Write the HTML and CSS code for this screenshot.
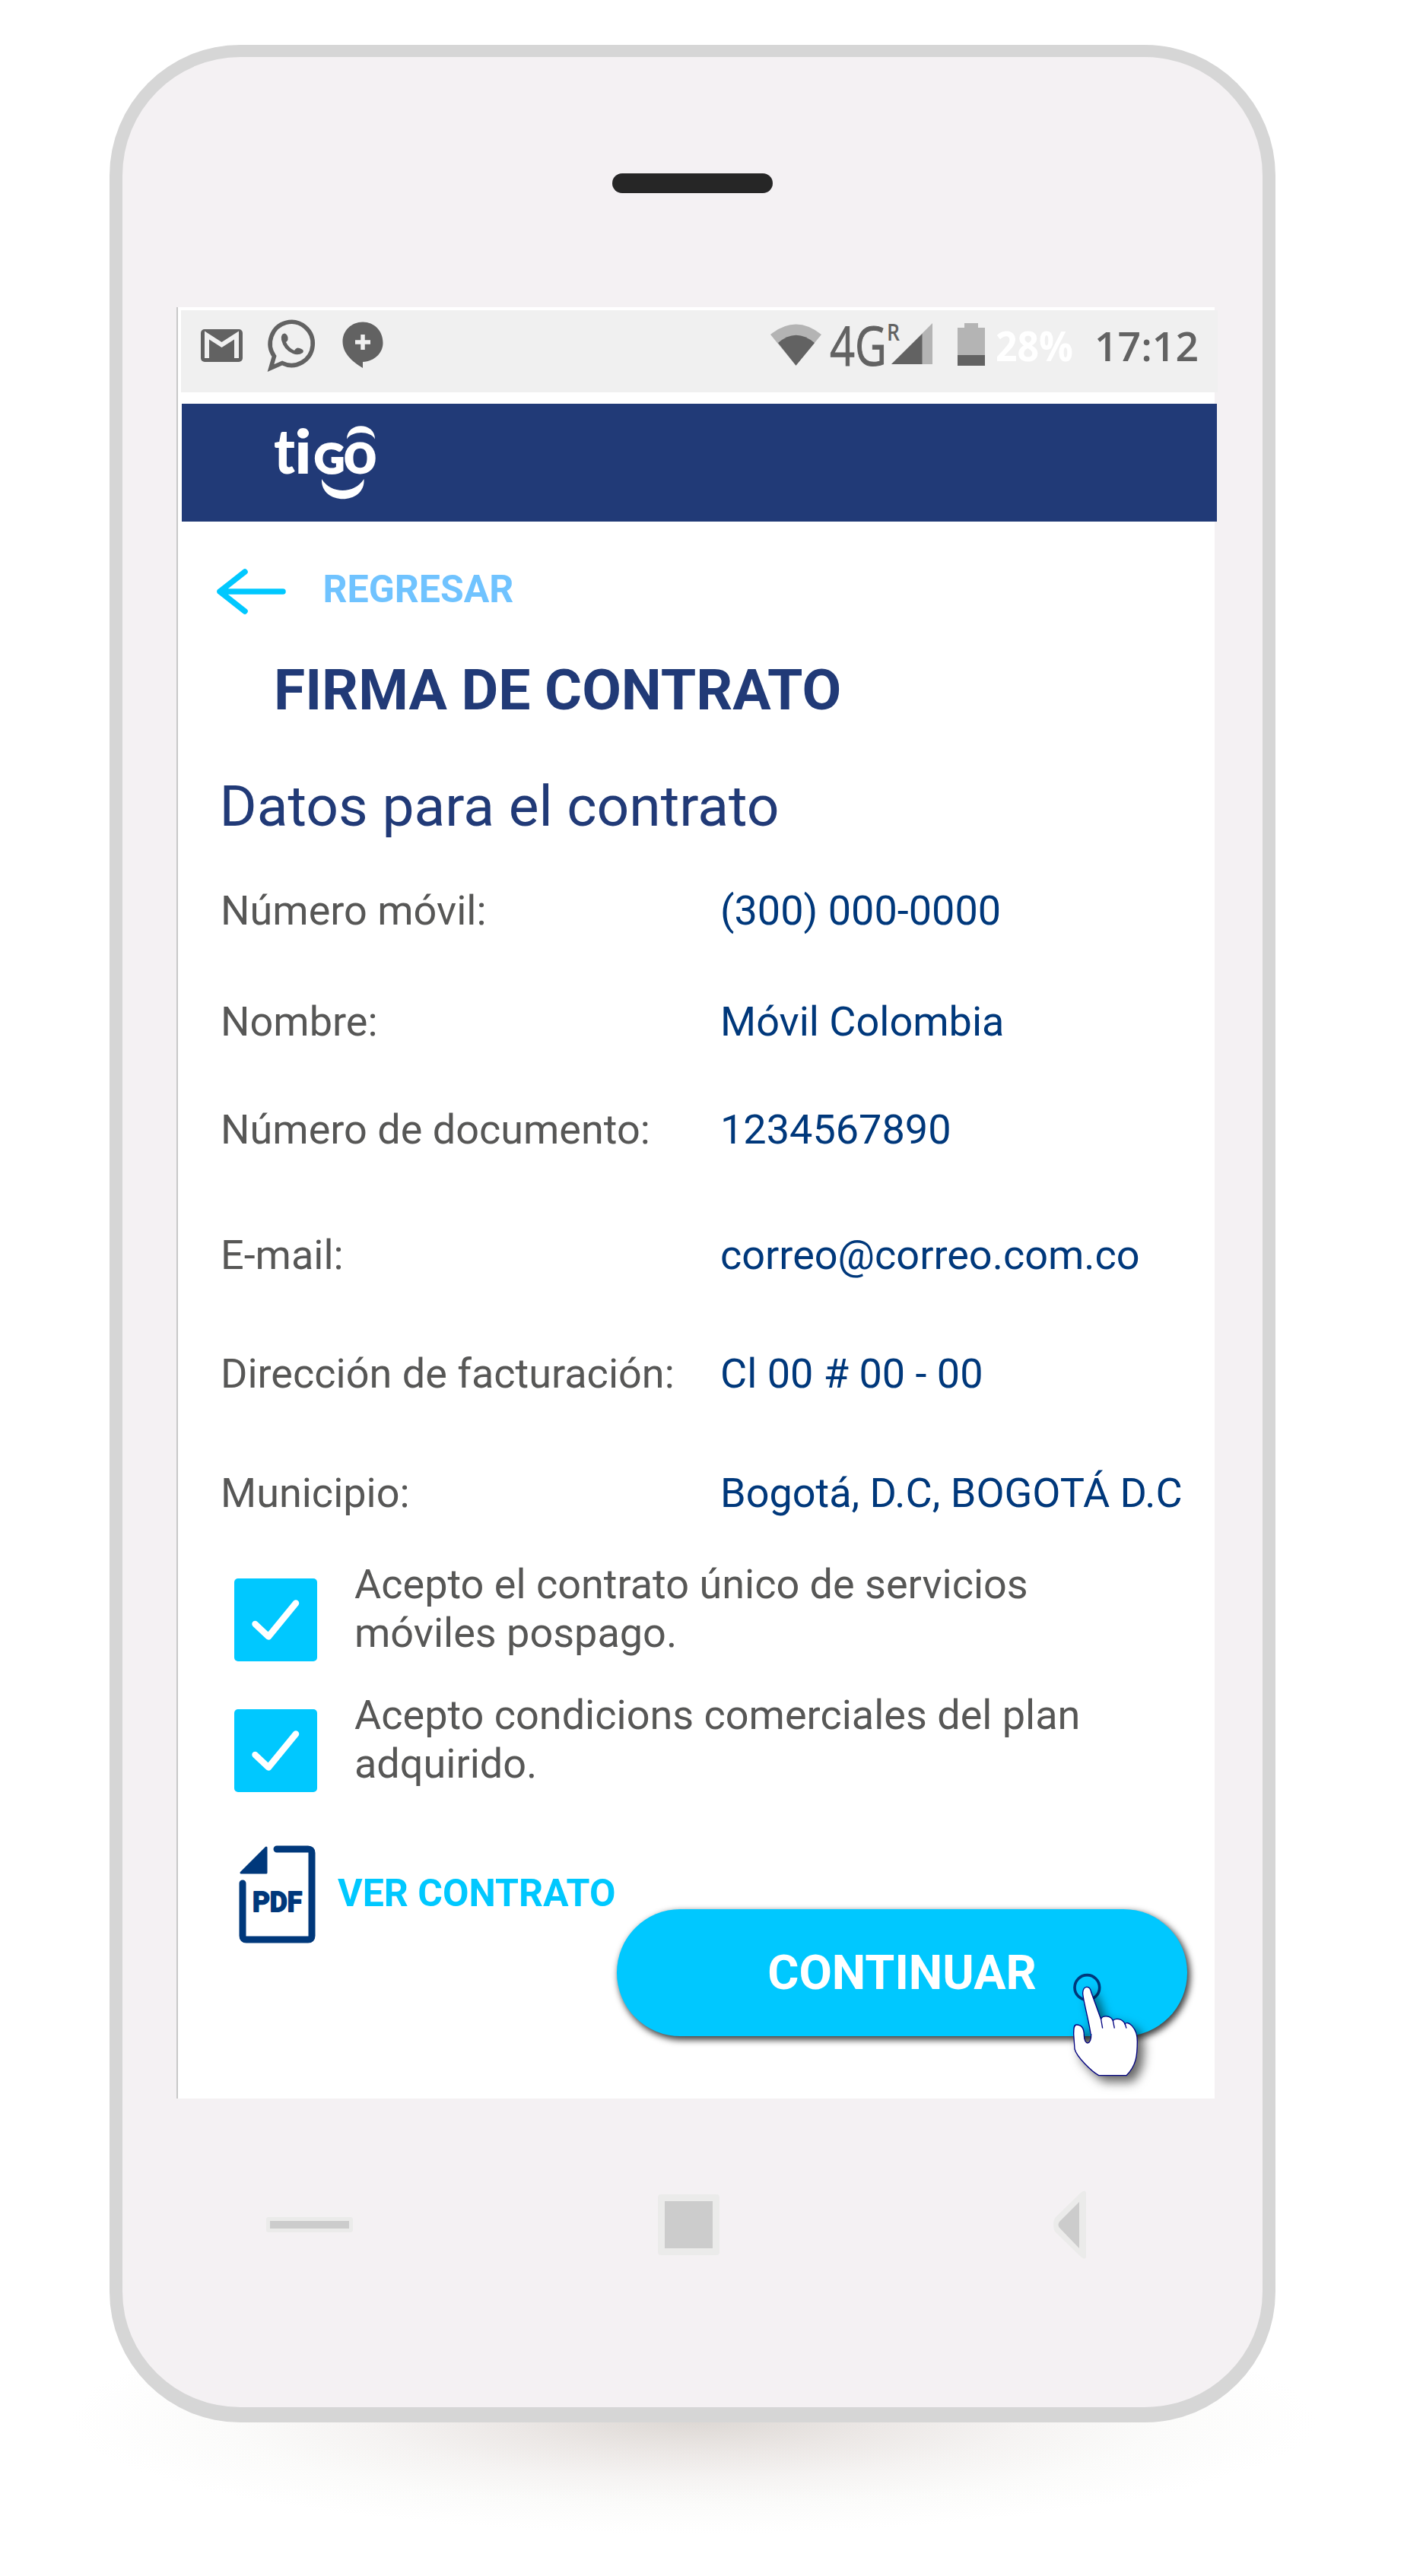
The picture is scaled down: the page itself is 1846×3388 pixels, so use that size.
FILE: index.html
```html
<!DOCTYPE html>
<html lang="es">
<head>
    <meta charset="UTF-8">
    <meta name="viewport" content="width=device-width, initial-scale=1.0">
    <title>Firma de contrato</title>
    <link rel="stylesheet" href="styles.css">
</head>
<body>
    <div class="phone">
        <div class="speaker"></div>

        <div class="screen">
            <div class="status">
                <svg class="gmail" width="55" height="72" viewBox="0 0 55 72">
                    <rect x="0" y="13" width="55" height="43" rx="5" fill="#626262"/>
                    <path d="M8 51V21L27.5 33.5L47 21V51" fill="none" stroke="#f0f0f0" stroke-width="6"/>
                </svg>
                <svg class="whatsapp" width="62" height="72" viewBox="0 0 62 72">
                    <path d="M3 64L7.5 48.5A28 28.5 0 1 1 18 57.5Z" fill="none" stroke="#626262" stroke-width="5.6"/>
                    <path d="M18 20Q22 16 25 22Q27 27 23 30Q27 38 34 41Q37 36 41 38Q48 40 45 44Q39 48 32 45Q20 40 17 27Q16 23 18 20Z" fill="#626262"/>
                </svg>
                <svg class="bubble" width="54" height="72" viewBox="0 0 54 72">
                    <path d="M27 3.5C42 3.5 53.5 15 53.5 31C53.5 44 43 55 27 56V64C12 55 0.5 44 0.5 29C0.5 15 12 3.5 27 3.5Z" fill="#626262"/>
                    <path d="M27 20V40M17 30H37" fill="none" stroke="#f0f0f0" stroke-width="5.5"/>
                </svg>

                <svg class="wifi" width="67" height="72" viewBox="0 0 67 72">
                    <path d="M0 20Q33.5 -7 67 20L33.5 60.7Z" fill="#b4b4b4"/>
                    <path d="M10 31Q33.5 10.5 58 31L33.5 60.7Z" fill="#626262"/>
                </svg>
                <svg class="network" width="134" height="72" viewBox="0 0 134 72">
                    <text x="-1" y="61" font-size="72" stroke="#626262" stroke-width="1" textLength="75" lengthAdjust="spacingAndGlyphs">4G</text>
                    <text x="74" y="28" font-size="31" font-weight="600" textLength="17" lengthAdjust="spacingAndGlyphs">R</text>
                    <path d="M80 59L134 5V59Z" fill="#b4b4b4"/>
                    <path d="M80 59L120.5 19V59Z" fill="#626262"/>
                </svg>
                <svg class="battery" width="36" height="72" viewBox="0 0 36 72">
                    <path d="M9 5H27V11H36V48H0V11H9Z" fill="#b4b4b4"/>
                    <rect x="0" y="47" width="36" height="14" fill="#626262"/>
                </svg>
                <svg class="percent" width="100" height="72" viewBox="0 0 100 72">
                    <text x="-2" y="55" font-size="53" textLength="102" lengthAdjust="spacingAndGlyphs">28%</text>
                </svg>
                <svg class="clock" width="133" height="72" viewBox="0 0 133 72">
                    <text x="-4" y="55" font-size="53" textLength="137" lengthAdjust="spacingAndGlyphs">17:12</text>
                </svg>
            </div>

            <div class="header">
                <svg width="140" height="100" viewBox="0 0 140 100">
                    <text class="logo" x="0" y="63" font-size="82" textLength="28" lengthAdjust="spacingAndGlyphs">t</text>
                    <text class="logo" x="27" y="63" font-size="80" textLength="23" lengthAdjust="spacingAndGlyphs">i</text>
                    <text class="logo logo-g" x="53" y="62.5" font-size="56" textLength="40" lengthAdjust="spacingAndGlyphs">G</text>
                    <text class="logo" x="91" y="63" font-size="80" textLength="45" lengthAdjust="spacingAndGlyphs">o</text>
                    <path d="M96 17.5C96 -5.5 133 -5.5 133 17.5C127 6 103 6 96 17.5Z" fill="#fff"/>
                    <path d="M63 70C75 90 106 90 118.5 70C121 105 61 105 63 70Z" fill="#fff"/>
                </svg>
            </div>

            <a class="back" href="#">
                <svg width="92" height="66" viewBox="0 0 92 66">
                    <path d="M37 7L4 33L37 59M4 33H87" fill="none" stroke="#00c8ff" stroke-width="7.5" stroke-linecap="round" stroke-linejoin="round"/>
                </svg>
                <span>REGRESAR</span>
            </a>

            <h1>FIRMA DE CONTRATO</h1>
            <h2>Datos para el contrato</h2>

            <div class="data">
                <span>Número móvil:</span><b>(300) 000-0000</b>
                <span>Nombre:</span><b>Móvil Colombia</b>
                <span>Número de documento:</span><b>1234567890</b>
                <span>E-mail:</span><b>correo@correo.com.co</b>
                <span>Dirección de facturación:</span><b>Cl 00 # 00 - 00</b>
                <span>Municipio:</span><b>Bogotá, D.C, BOGOTÁ D.C</b>
            </div>

            <div class="check">
                <svg width="109" height="109" viewBox="0 0 109 109">
                    <rect width="109" height="109" rx="5" fill="#00c8ff"/>
                    <path d="M27.5 60L45 76.5L81 32.5" fill="none" stroke="#fff" stroke-width="8.5" stroke-linecap="round" stroke-linejoin="round"/>
                </svg>
                <p>Acepto el contrato único de servicios<br>móviles pospago.</p>
            </div>
            <div class="check">
                <svg width="109" height="109" viewBox="0 0 109 109">
                    <rect width="109" height="109" rx="5" fill="#00c8ff"/>
                    <path d="M27.5 60L45 76.5L81 32.5" fill="none" stroke="#fff" stroke-width="8.5" stroke-linecap="round" stroke-linejoin="round"/>
                </svg>
                <p>Acepto condicions comerciales del plan<br>adquirido.</p>
            </div>

            <div class="actions">
                <a class="contract" href="#">
                    <svg width="101" height="129" viewBox="0 0 101 129">
                        <path d="M50 5H91Q96 5 96 10V119Q96 124 91 124H10Q5 124 5 119V50" fill="none" stroke="#00387b" stroke-width="9" stroke-linecap="round"/>
                        <path d="M3 36L36 3V36Z" fill="#00387b" stroke="#00387b" stroke-width="3" stroke-linejoin="round"/>
                        <text x="18" y="87" font-size="36" textLength="65" lengthAdjust="spacingAndGlyphs">PDF</text>
                    </svg>
                    <span>VER CONTRATO</span>
                </a>
                <button class="continue" type="button">
                    CONTINUAR
                    <svg class="hand" width="200" height="200" viewBox="0 0 600 600">
                        <circle cx="151" cy="162" r="49" fill="none" stroke="#00387b" stroke-width="11"/>
                        <path class="hand-shape" d="M165 345C160 300 132 200 134 182C136 154 162 152 167 180L206 288C207 270 245 272 253 293C262 280 292 286 300 306C310 290 350 320 349 375C349 430 345 470 306 509H197C165 490 110 435 102 405L98 345C98 322 99 309 109 309C132 309 139 325 139 350C139 392 169 392 167 345" fill="#fff" stroke="#000080" stroke-width="4"/>
                        <path d="M206 288L212 323M253 293L259 323M300 303L306 323" fill="none" stroke="#000080" stroke-width="4"/>
                    </svg>
                </button>
            </div>
        </div>

        <div class="nav">
            <div class="nav-menu"></div>
            <div class="nav-home"></div>
            <svg width="46" height="94" viewBox="0 0 46 94">
                <path d="M40 4L5 38Q1 47 5 56L40 90Q46 94 46 88V6Q46 0 40 4Z" fill="#ebebea"/>
                <path d="M37 17V78L11 51Q8 47 11 43Z" fill="#cccccc"/>
            </svg>
        </div>
    </div>
</body>
</html>
```
FILE: styles.css
```css
* {
    box-sizing: border-box;
}

body {
    margin: 0;
    height: 3388px;
    background: #fff;
    font-family: Roboto, Arial, sans-serif;
    overflow: hidden;
}

svg {
    display: block;
    flex: none;
    overflow: visible;
}

a {
    text-decoration: none;
}

/* phone */
.phone {
    position: relative;
    width: 1533px;
    height: 3127px;
    margin: 58.5px 0 0 143.5px;
    border: 17px solid #d6d6d6;
    border-top-width: 16px;
    border-bottom-width: 20.5px;
    border-radius: 172px;
    background: #f4f1f3;
}

/* soft shadow on the floor */
.phone::after {
    content: "";
    position: absolute;
    z-index: -1;
    left: -70px;
    bottom: -166px;
    width: 1640px;
    height: 300px;
    background: radial-gradient(closest-side, #dcd7d3 0%, #ece8e6 30%, #f5f3f2 52%, #fbfbfa 75%, #fff 100%);
}

.speaker {
    width: 211px;
    height: 26px;
    margin: 153.5px 0 0 644.5px;
    border-radius: 13px;
    background: #262626;
}

.screen {
    width: 1365px;
    height: 2356px;
    margin: 150px 0 0 71.5px;
    padding-top: 4px;
    border-left: 2px solid #c8c8c8;
    background: #fff;
}

/* status bar */
.status {
    display: flex;
    width: 1363px;
    height: 108px;
    margin-left: 4px;
    padding: 12px 0 0 26px;
    background: #f0f0f0;
}

.status text {
    font-family: "Open Sans", sans-serif;
    fill: #626262;
}

.whatsapp { margin-left: 34px; }
.bubble { margin-left: 35px; }
.wifi { margin-left: 509px; }
.network { margin-left: 12px; }
.battery { margin-left: 33px; }
.percent { margin-left: 16px; }
.clock { margin-left: 32px; }

.status .percent text {
    fill: #fff;
    font-weight: bold;
}

.status .clock text {
    font-weight: 600;
}

.header {
    width: 1361px;
    height: 155px;
    margin: 14.5px 0 0 5px;
    padding: 29px 0 0 121px;
    background: #213a77;
}

.logo {
    font-family: Lato, sans-serif;
    font-weight: 900;
    fill: #fff;
}

.logo-g {
    stroke: #fff;
    stroke-width: 2px;
}

.back {
    display: flex;
    align-items: center;
    margin: 59.5px 0 0 50.5px;
    color: #70c3ff;
    font-size: 50px;
    font-weight: bold;
}

.back span {
    margin: -6px 0 0 48px;
}

h1 {
    margin: 51.5px 0 0 126px;
    color: #213a77;
    font-size: 75px;
    line-height: 88px;
}

h2 {
    margin: 65.5px 0 0 54.5px;
    color: #213a77;
    font-size: 75px;
    font-weight: normal;
    line-height: 88px;
}

.data {
    display: grid;
    grid-template-columns: 657px 1fr;
    grid-template-rows: 146.5px 141.5px 165.5px 155.5px 157.5px 64px;
    margin: 61.5px 0 0 56px;
    font-size: 54px;
    line-height: 64px;
    color: #575756;
    white-space: nowrap;
}

.data b {
    font-weight: normal;
    color: #00387b;
}

.check {
    display: flex;
    height: 172px;
    margin-left: 74px;
    color: #575756;
    font-size: 54px;
    line-height: 64.5px;
}

.data + .check {
    margin-top: 55.5px;
}

.check svg {
    margin-top: 24px;
}

.check p {
    margin: 0 0 0 49px;
    white-space: nowrap;
}

.actions {
    display: flex;
    justify-content: space-between;
    align-items: flex-start;
    margin: 31px 36px 0 80px;
}

.contract {
    display: flex;
    align-items: center;
    color: #00c8ff;
    font-size: 50px;
    font-weight: bold;
    white-space: nowrap;
}

.contract text {
    font-weight: bold;
    fill: #00387b;
    stroke: #00387b;
    stroke-width: 2px;
    stroke-linejoin: round;
}

.contract span {
    margin: -3px 0 0 29px;
}

.continue {
    position: relative;
    width: 750px;
    height: 167px;
    margin-top: 84px;
    padding: 0;
    border: none;
    border-radius: 84px;
    background: #00c8ff;
    box-shadow: 3px 4px 9px 1px rgba(0, 0, 0, 0.75);
    color: #fff;
    font-family: inherit;
    font-size: 63px;
    font-weight: bold;
}

.hand {
    position: absolute;
    left: 568px;
    top: 49px;
}

.hand-shape {
    filter: drop-shadow(24px 24px 20px rgba(0, 0, 0, 0.6));
}

/* android buttons */
.nav {
    display: flex;
    align-items: center;
    height: 94px;
    margin: 119px 0 0 189px;
}

.nav-menu {
    width: 114px;
    height: 20px;
    border: 5px solid #ebebea;
    border-radius: 3px;
    background: #cccccc;
}

.nav-home {
    width: 81px;
    height: 80px;
    margin: 0 436px 0 401px;
    border: 9px solid #ebebea;
    border-radius: 4px;
    background: #cccccc;
}
```
